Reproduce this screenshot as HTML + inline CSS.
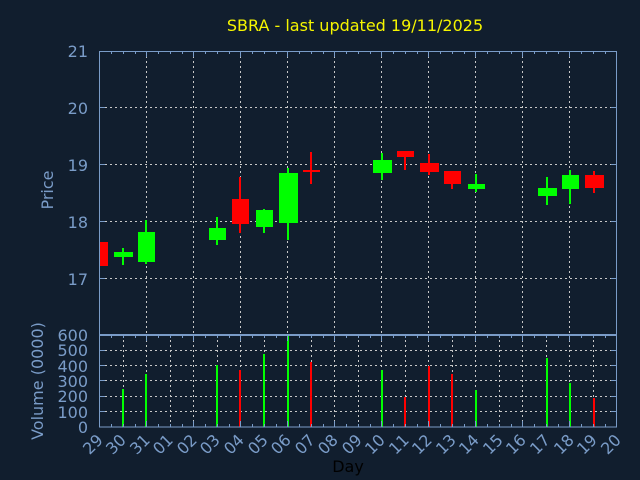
<!DOCTYPE html>
<html><head><meta charset="utf-8"><style>
html,body{margin:0;padding:0;background:#111e2e;}
svg{display:block;font-family:"DejaVu Sans","Liberation Sans",sans-serif;}
</style></head><body>
<svg width="640" height="480" xmlns="http://www.w3.org/2000/svg">
<rect width="640" height="480" fill="#111e2e"/>
<text x="355" y="31" fill="#f5f500" font-size="16" text-anchor="middle">SBRA - last updated 19/11/2025</text>
<g stroke="#c8c8c8" stroke-width="1" stroke-dasharray="2,3">
<line x1="100" x2="617" y1="107.5" y2="107.5"/>
<line x1="100" x2="617" y1="164.5" y2="164.5"/>
<line x1="100" x2="617" y1="221.5" y2="221.5"/>
<line x1="100" x2="617" y1="278.5" y2="278.5"/>
<line x1="146.5" x2="146.5" y1="51" y2="334"/>
<line x1="193.5" x2="193.5" y1="51" y2="334"/>
<line x1="240.5" x2="240.5" y1="51" y2="334"/>
<line x1="287.5" x2="287.5" y1="51" y2="334"/>
<line x1="334.5" x2="334.5" y1="51" y2="334"/>
<line x1="381.5" x2="381.5" y1="51" y2="334"/>
<line x1="428.5" x2="428.5" y1="51" y2="334"/>
<line x1="475.5" x2="475.5" y1="51" y2="334"/>
<line x1="522.5" x2="522.5" y1="51" y2="334"/>
<line x1="569.5" x2="569.5" y1="51" y2="334"/>
<line x1="100" x2="617" y1="350.5" y2="350.5"/>
<line x1="100" x2="617" y1="365.5" y2="365.5"/>
<line x1="100" x2="617" y1="380.5" y2="380.5"/>
<line x1="100" x2="617" y1="396.5" y2="396.5"/>
<line x1="100" x2="617" y1="411.5" y2="411.5"/>
<line x1="123.5" x2="123.5" y1="335" y2="427"/><line x1="146.5" x2="146.5" y1="335" y2="427"/><line x1="170.5" x2="170.5" y1="335" y2="427"/><line x1="193.5" x2="193.5" y1="335" y2="427"/><line x1="217.5" x2="217.5" y1="335" y2="427"/><line x1="240.5" x2="240.5" y1="335" y2="427"/><line x1="264.5" x2="264.5" y1="335" y2="427"/><line x1="287.5" x2="287.5" y1="335" y2="427"/><line x1="311.5" x2="311.5" y1="335" y2="427"/><line x1="334.5" x2="334.5" y1="335" y2="427"/><line x1="358.5" x2="358.5" y1="335" y2="427"/><line x1="381.5" x2="381.5" y1="335" y2="427"/><line x1="405.5" x2="405.5" y1="335" y2="427"/><line x1="428.5" x2="428.5" y1="335" y2="427"/><line x1="452.5" x2="452.5" y1="335" y2="427"/><line x1="475.5" x2="475.5" y1="335" y2="427"/><line x1="499.5" x2="499.5" y1="335" y2="427"/><line x1="522.5" x2="522.5" y1="335" y2="427"/><line x1="546.5" x2="546.5" y1="335" y2="427"/><line x1="569.5" x2="569.5" y1="335" y2="427"/><line x1="593.5" x2="593.5" y1="335" y2="427"/>
</g>
<g stroke-width="2">
<rect x="99" y="242" width="9" height="24" fill="#ff0000"/>
<line x1="123" x2="123" y1="248" y2="265" stroke="#00ff00"/><rect x="114" y="252" width="19" height="5" fill="#00ff00"/>
<line x1="146" x2="146" y1="220" y2="264" stroke="#00ff00"/><rect x="138" y="232" width="17" height="30" fill="#00ff00"/>
<line x1="217" x2="217" y1="217" y2="245" stroke="#00ff00"/><rect x="209" y="228" width="17" height="12" fill="#00ff00"/>
<line x1="240" x2="240" y1="177" y2="233" stroke="#ff0000"/><rect x="232" y="199" width="17" height="25" fill="#ff0000"/>
<line x1="264" x2="264" y1="209" y2="233" stroke="#00ff00"/><rect x="256" y="210" width="17" height="17" fill="#00ff00"/>
<line x1="288" x2="288" y1="168" y2="240" stroke="#00ff00"/><rect x="279" y="173" width="19" height="50" fill="#00ff00"/>
<line x1="311" x2="311" y1="152" y2="184" stroke="#ff0000"/><rect x="303" y="170" width="17" height="2" fill="#ff0000"/>
<line x1="382" x2="382" y1="153" y2="180" stroke="#00ff00"/><rect x="373" y="160" width="19" height="13" fill="#00ff00"/>
<line x1="405" x2="405" y1="151" y2="170" stroke="#ff0000"/><rect x="397" y="151" width="17" height="6" fill="#ff0000"/>
<line x1="429" x2="429" y1="154" y2="175" stroke="#ff0000"/><rect x="420" y="163" width="19" height="9" fill="#ff0000"/>
<line x1="452" x2="452" y1="171" y2="189" stroke="#ff0000"/><rect x="444" y="171" width="17" height="13" fill="#ff0000"/>
<line x1="476" x2="476" y1="174" y2="192" stroke="#00ff00"/><rect x="468" y="184" width="17" height="5" fill="#00ff00"/>
<line x1="547" x2="547" y1="177" y2="205" stroke="#00ff00"/><rect x="538" y="188" width="19" height="8" fill="#00ff00"/>
<line x1="570" x2="570" y1="170" y2="204" stroke="#00ff00"/><rect x="562" y="175" width="17" height="14" fill="#00ff00"/>
<line x1="594" x2="594" y1="171" y2="193" stroke="#ff0000"/><rect x="585" y="175" width="19" height="13" fill="#ff0000"/>
</g>
<g stroke-width="2">
<line x1="123" x2="123" y1="389" y2="427" stroke="#00ff00"/>
<line x1="146" x2="146" y1="374" y2="427" stroke="#00ff00"/>
<line x1="217" x2="217" y1="365" y2="427" stroke="#00ff00"/>
<line x1="240" x2="240" y1="370" y2="427" stroke="#ff0000"/>
<line x1="264" x2="264" y1="354" y2="427" stroke="#00ff00"/>
<line x1="288" x2="288" y1="335" y2="427" stroke="#00ff00"/>
<line x1="311" x2="311" y1="362" y2="427" stroke="#ff0000"/>
<line x1="382" x2="382" y1="370" y2="427" stroke="#00ff00"/>
<line x1="405" x2="405" y1="397" y2="427" stroke="#ff0000"/>
<line x1="429" x2="429" y1="366" y2="427" stroke="#ff0000"/>
<line x1="452" x2="452" y1="374" y2="427" stroke="#ff0000"/>
<line x1="476" x2="476" y1="390" y2="427" stroke="#00ff00"/>
<line x1="547" x2="547" y1="358" y2="427" stroke="#00ff00"/>
<line x1="570" x2="570" y1="383" y2="427" stroke="#00ff00"/>
<line x1="594" x2="594" y1="398" y2="427" stroke="#ff0000"/>
</g>
<g stroke="#7a9cc8" stroke-width="1" fill="none">
<rect x="99.5" y="51.5" width="517" height="283"/>
<rect x="99.5" y="335.5" width="517" height="91.5"/>
<path d="M99 107.5h6M99 164.5h6M99 221.5h6M99 278.5h6M611 107.5h6M611 164.5h6M611 221.5h6M611 278.5h6"/>
<path d="M99 350.5h6M99 365.5h6M99 380.5h6M99 396.5h6M99 411.5h6M611 350.5h6M611 365.5h6M611 380.5h6M611 396.5h6M611 411.5h6"/>
<path d="M111.5 51v3M123.5 51v3M135.5 51v3M146.5 51v6M158.5 51v3M170.5 51v3M182.5 51v3M193.5 51v6M205.5 51v3M217.5 51v3M229.5 51v3M240.5 51v6M252.5 51v3M264.5 51v3M276.5 51v3M287.5 51v6M299.5 51v3M311.5 51v3M323.5 51v3M334.5 51v6M346.5 51v3M358.5 51v3M370.5 51v3M381.5 51v6M393.5 51v3M405.5 51v3M417.5 51v3M428.5 51v6M440.5 51v3M452.5 51v3M464.5 51v3M475.5 51v6M487.5 51v3M499.5 51v3M511.5 51v3M522.5 51v6M534.5 51v3M546.5 51v3M558.5 51v3M569.5 51v6M581.5 51v3M593.5 51v3M605.5 51v3"/>
<path d="M111.5 335v3M123.5 335v3M135.5 335v3M146.5 335v6M158.5 335v3M170.5 335v3M182.5 335v3M193.5 335v6M205.5 335v3M217.5 335v3M229.5 335v3M240.5 335v6M252.5 335v3M264.5 335v3M276.5 335v3M287.5 335v6M299.5 335v3M311.5 335v3M323.5 335v3M334.5 335v6M346.5 335v3M358.5 335v3M370.5 335v3M381.5 335v6M393.5 335v3M405.5 335v3M417.5 335v3M428.5 335v6M440.5 335v3M452.5 335v3M464.5 335v3M475.5 335v6M487.5 335v3M499.5 335v3M511.5 335v3M522.5 335v6M534.5 335v3M546.5 335v3M558.5 335v3M569.5 335v6M581.5 335v3M593.5 335v3M605.5 335v3"/>
<path d="M111.5 427v-3M123.5 427v-3M135.5 427v-3M146.5 427v-6M158.5 427v-3M170.5 427v-3M182.5 427v-3M193.5 427v-6M205.5 427v-3M217.5 427v-3M229.5 427v-3M240.5 427v-6M252.5 427v-3M264.5 427v-3M276.5 427v-3M287.5 427v-6M299.5 427v-3M311.5 427v-3M323.5 427v-3M334.5 427v-6M346.5 427v-3M358.5 427v-3M370.5 427v-3M381.5 427v-6M393.5 427v-3M405.5 427v-3M417.5 427v-3M428.5 427v-6M440.5 427v-3M452.5 427v-3M464.5 427v-3M475.5 427v-6M487.5 427v-3M499.5 427v-3M511.5 427v-3M522.5 427v-6M534.5 427v-3M546.5 427v-3M558.5 427v-3M569.5 427v-6M581.5 427v-3M593.5 427v-3M605.5 427v-3"/>
</g>
<g fill="#7a9cc8" font-size="16" text-anchor="end">
<text x="88" y="57">21</text><text x="88" y="114">20</text><text x="88" y="171">19</text><text x="88" y="228">18</text><text x="88" y="285">17</text>
<text x="88" y="341">600</text><text x="88" y="356">500</text><text x="88" y="372">400</text><text x="88" y="387">300</text><text x="88" y="402">200</text><text x="88" y="418">100</text><text x="88" y="433">0</text>
</g>
<g fill="#7a9cc8" font-size="16">
<text transform="translate(53,190) rotate(-90)" text-anchor="middle">Price</text>
<text transform="translate(43,381) rotate(-90)" text-anchor="middle">Volume (0000)</text>
</g>
<g fill="#7a9cc8" font-size="16" text-anchor="end">
<text transform="translate(104,441) rotate(-45)">29</text>
<text transform="translate(127,441) rotate(-45)">30</text>
<text transform="translate(151,441) rotate(-45)">31</text>
<text transform="translate(174,441) rotate(-45)">01</text>
<text transform="translate(198,441) rotate(-45)">02</text>
<text transform="translate(221,441) rotate(-45)">03</text>
<text transform="translate(245,441) rotate(-45)">04</text>
<text transform="translate(269,441) rotate(-45)">05</text>
<text transform="translate(292,441) rotate(-45)">06</text>
<text transform="translate(316,441) rotate(-45)">07</text>
<text transform="translate(339,441) rotate(-45)">08</text>
<text transform="translate(363,441) rotate(-45)">09</text>
<text transform="translate(386,441) rotate(-45)">10</text>
<text transform="translate(410,441) rotate(-45)">11</text>
<text transform="translate(433,441) rotate(-45)">12</text>
<text transform="translate(457,441) rotate(-45)">13</text>
<text transform="translate(480,441) rotate(-45)">14</text>
<text transform="translate(504,441) rotate(-45)">15</text>
<text transform="translate(527,441) rotate(-45)">16</text>
<text transform="translate(551,441) rotate(-45)">17</text>
<text transform="translate(575,441) rotate(-45)">18</text>
<text transform="translate(598,441) rotate(-45)">19</text>
<text transform="translate(622,441) rotate(-45)">20</text>
</g>
<text x="348" y="472" fill="#000000" font-size="16" text-anchor="middle">Day</text>
</svg>
</body></html>
